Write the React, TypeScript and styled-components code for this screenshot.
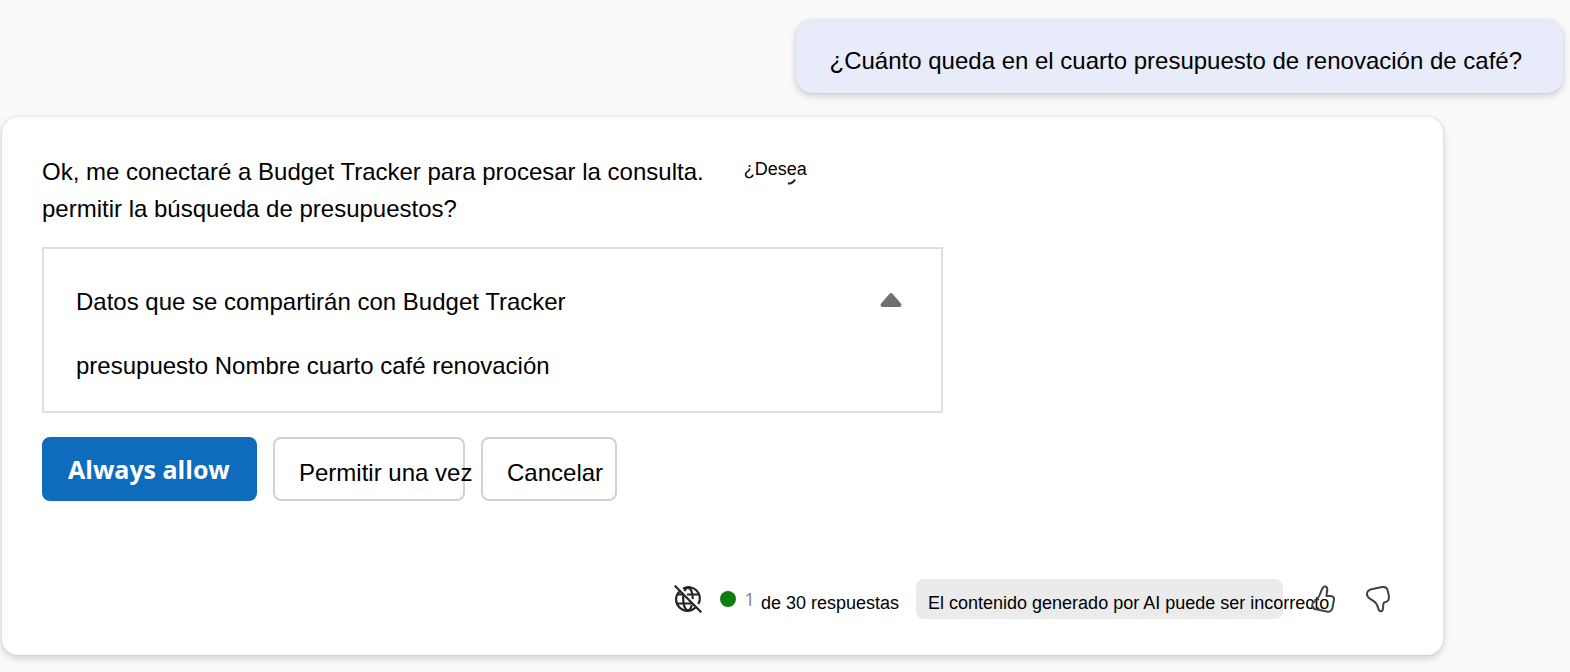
import React from "react";
import styled, { createGlobalStyle } from "styled-components";

const GlobalStyle = createGlobalStyle`
  * { box-sizing: border-box; }
  body {
    margin: 0;
    background: #fafafa;
    color: #000;
    font-family: "Liberation Sans", Arial, sans-serif;
    font-size: 24px;
    line-height: 36px;
  }
`;

const Chat = styled.main`
  display: flex;
  flex-direction: column;
  gap: 24px;
  padding: 20px 7px 16px 2px;
`;

const UserMessage = styled.div`
  align-self: flex-end;
  padding: 23px 41px 14px 34px;
  border-radius: 16px;
  background: #e8ebfa;
  box-shadow: 0 3px 8px rgba(0, 0, 0, 0.18), 0 0 2px rgba(0, 0, 0, 0.12);
`;

const Card = styled.article`
  margin-right: 120px;
  padding: 36px 40px;
  border-radius: 16px;
  background: #fff;
  box-shadow: 0 3px 8px rgba(0, 0, 0, 0.18), 0 0 2px rgba(0, 0, 0, 0.12);
`;

const Question = styled.p`
  margin: 0;
  line-height: 37px;
`;

const FirstLine = styled.span`
  display: flex;
  gap: 40px;
`;

const Aside = styled.span`
  position: relative;
  font-size: 18px;
  line-height: 32px;
`;

const Tail = styled.svg`
  position: absolute;
  right: 10px;
  bottom: 5px;
`;

const Panel = styled.section`
  max-width: 901px;
  margin-top: 20px;
  padding: 35px 39px 27px 32px;
  border: 2px solid #dfdfdf;
`;

const PanelHeader = styled.div`
  display: flex;
  align-items: center;
  justify-content: space-between;
  margin-bottom: 28px;
`;

const PanelTitle = styled.h2`
  margin: 0;
  font-size: 24px;
  font-weight: 400;
`;

const PanelText = styled.p`
  margin: 0;
`;

const IconButton = styled.button`
  display: flex;
  padding: 0;
  border: 0;
  background: none;
  cursor: pointer;
`;

const Actions = styled.div`
  display: flex;
  gap: 16px;
  margin-top: 24px;
`;

const ActionButton = styled.button<{ $width: number }>`
  width: ${(p) => p.$width}px;
  height: 64px;
  padding: 8px 0 0 24px;
  border: 2px solid #d1d1d1;
  border-radius: 8px;
  background: #fff;
  color: #000;
  font: 24px/36px "Liberation Sans", Arial, sans-serif;
  text-align: left;
  white-space: nowrap;
  cursor: pointer;
`;

const PrimaryButton = styled(ActionButton)`
  padding-top: 0;
  border-color: #0f6cbd;
  background: #0f6cbd;
  color: #fff;
  font: 700 25px/36px "Open Sans", sans-serif;
`;

const Footer = styled.footer`
  display: flex;
  align-items: center;
  justify-content: flex-end;
  margin-top: 78px;
  padding-right: 11px;
  font-size: 18px;
  line-height: 24px;
`;

const Dot = styled.span`
  width: 16px;
  height: 16px;
  margin: 0 9px 0 18px;
  border-radius: 50%;
  background: #107c10;
`;

const Count = styled.span`
  margin-right: 6px;
  color: #808080;
  font-family: "Open Sans", sans-serif;
`;

const CountText = styled.span`
  padding-top: 8px;
`;

const Notice = styled.span`
  width: 367px;
  height: 40px;
  margin: 0 26px 0 17px;
  padding: 12px 0 0 12px;
  border-radius: 8px;
  background: #ebebeb;
  white-space: nowrap;
`;

const Feedback = styled.div`
  display: flex;
  gap: 27px;
`;

const App = () => (
  <>
    <GlobalStyle />
    <Chat>
      <UserMessage>¿Cuánto queda en el cuarto presupuesto de renovación de café?</UserMessage>
      <Card>
        <Question>
          <FirstLine>
            Ok, me conectaré a Budget Tracker para procesar la consulta.
            <Aside>
              ¿Desea
              <Tail width="10" height="6" viewBox="0 0 10 6" fill="none" stroke="#222" strokeWidth="2" aria-hidden="true">
                <path d="M1 4.3C4 5 6 4 8 .5" />
              </Tail>
            </Aside>
          </FirstLine>
          permitir la búsqueda de presupuestos?
        </Question>
        <Panel>
          <PanelHeader>
            <PanelTitle>Datos que se compartirán con Budget Tracker</PanelTitle>
            <IconButton type="button" aria-label="Contraer" aria-expanded="true">
              <svg width="22" height="20" viewBox="0 0 22 20" fill="#707070">
                <path d="M9.5 1.7Q11 .2 12.5 1.7L21.300 12Q22 14.500 20 15H2Q0 14.500 .7 12Z" />
              </svg>
            </IconButton>
          </PanelHeader>
          <PanelText>presupuesto Nombre cuarto café renovación</PanelText>
        </Panel>
        <Actions>
          <PrimaryButton type="button" $width={215}>Always allow</PrimaryButton>
          <ActionButton type="button" $width={192}>Permitir una vez</ActionButton>
          <ActionButton type="button" $width={136}>Cancelar</ActionButton>
        </Actions>
        <Footer>
          <svg width="28" height="28" viewBox="0 0 28 28" fill="none" stroke="#242424" strokeWidth="2.2" aria-hidden="true">
            <path d="M9 3.600A11.300 11.300 0 0 1 24.400 19M21.500 22.500A11.300 11.300 0 0 1 5.400 6.500" />
            <path d="M10.500 6C11.300 3.900 12.500 2.700 14 2.700c2.700 0 4.800 5 4.800 11.300M17.800 20c-.9 3.300-2.200 5.300-3.800 5.300-2.700 0-4.800-5-4.800-11.300v-3.500" />
            <path d="M13 9.500h11.200M3.800 9.500h5.700M3.800 18.500h14" />
            <path d="M.7.7l26.600 26.600" />
          </svg>
          <Dot />
          <Count>1</Count>
          <CountText>de 30 respuestas</CountText>
          <Notice>El contenido generado por AI puede ser incorrecto</Notice>
          <Feedback>
            <IconButton type="button" aria-label="Me gusta">
              <svg width="28" height="28" viewBox="0 0 28 28" fill="none" stroke="#424242" strokeWidth="2" strokeLinejoin="round">
                <path d="M15.500 1.500c2.300-.3 3 1.500 2.700 4l-.8 5.500h4.300c2.500 0 3.700 1.800 3.200 4l-1.500 8c-.6 2.800-2.800 4.300-5.600 3.600L6 24c-1.800-.5-2.600-1.800-2.800-3.400-.2-1.700.5-3 2-3.800C9 14.500 10 12 11.500 8c1.200-3 2-6.200 4-6.500z" />
              </svg>
            </IconButton>
            <IconButton type="button" aria-label="No me gusta">
              <svg width="28" height="28" viewBox="0 0 28 28" fill="none" stroke="#424242" strokeWidth="2" strokeLinejoin="round">
                <path d="M7.500 4.200L18 2.100c3-.6 5 .6 5.700 3.300l1 4.600c.9 4.200-.4 6.800-3.900 7.300-1.200.2-1.500.8-1.500 2l-.2 3.400c-.1 2-.9 3.600-2.300 3.600-1.600 0-2.200-1.400-2.600-3-.8-3.300-1.500-5.100-4.200-6.900L5.800 13.600C3.600 12 2.700 10.200 3 8.300c.4-2.300 1.800-3.500 4.500-4.100z" />
              </svg>
            </IconButton>
          </Feedback>
        </Footer>
      </Card>
    </Chat>
  </>
);

export default App;
